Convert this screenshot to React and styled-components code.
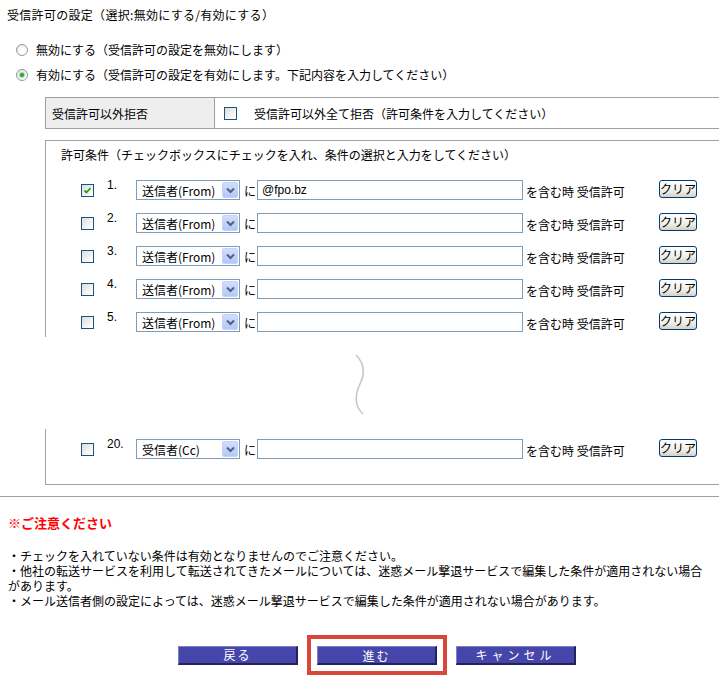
import React from "react";
import styled, { createGlobalStyle } from "styled-components";

const GlobalStyle = createGlobalStyle`
  body {
    margin: 0;
    background: #ffffff;
    color: #000000;
    font-family: "Noto Sans CJK JP", "Noto Sans", sans-serif;
    font-size: 12px;
  }
`;

const Page = styled.div`
  width: 719px;
  padding-top: 8px;
`;

const Title = styled.div`
  padding-left: 7px;
  line-height: 14px;
  letter-spacing: 0.3px;
`;

const RadioList = styled.div`
  margin-top: 15px;
  padding-left: 16px;
`;

const RadioRow = styled.label`
  display: flex;
  align-items: center;
  height: 25px;
  gap: 8px;
`;

const RadioDot = styled.span`
  width: 12px;
  height: 12px;
  box-sizing: border-box;
  border-radius: 50%;
  border: 1px solid #8e9aa8;
  background: radial-gradient(circle at 60% 65%, #ffffff 30%, #dcdcd4 100%);
  display: flex;
  align-items: center;
  justify-content: center;

  &::after {
    content: "";
    width: 4px;
    height: 4px;
    border-radius: 50%;
    background: ${(p) => (p.$on ? "#2fa52f" : "transparent")};
    box-shadow: ${(p) => (p.$on ? "0 0 1px 1px #9fd89f" : "none")};
  }
`;

const RejectBox = styled.div`
  margin: 10px 0 0 45px;
  display: flex;
  height: 32px;
  box-sizing: border-box;
  border: 1px solid #a0a0a0;
  border-right: none;
`;

const RejectHead = styled.div`
  width: 169px;
  background: #eeeeee;
  border-right: 1px solid #a0a0a0;
  padding-left: 6px;
  display: flex;
  align-items: center;
  box-sizing: border-box;
`;

const RejectBody = styled.div`
  display: flex;
  align-items: center;
  padding-left: 9px;
  gap: 17px;
`;

const CheckBox = styled.span`
  width: 13px;
  height: 13px;
  box-sizing: border-box;
  border: 1px solid #1c5180;
  background: linear-gradient(135deg, #dcdcd7 0%, #ffffff 90%);
  display: inline-flex;
  align-items: center;
  justify-content: center;
  flex: none;
`;

const CondBox = styled.div`
  margin: 11px 0 0 45px;
`;

const CondUpper = styled.div`
  border-top: 1px solid #a0a0a0;
  border-left: 1px solid #a0a0a0;
  padding: 7px 0 5px 0;
`;

const CondHead = styled.div`
  padding-left: 15px;
  line-height: 14px;
`;

const Rows = styled.div`
  margin-top: 18px;
  display: flex;
  flex-direction: column;
  gap: 13px;
`;

const Gap = styled.div`
  height: 92px;
  padding-left: 308px;
  box-sizing: border-box;
  padding-top: 17px;
`;

const CondLower = styled.div`
  border-left: 1px solid #a0a0a0;
  border-bottom: 1px solid #a0a0a0;
  padding: 10px 0 25px 0;
`;

const Row = styled.div`
  display: flex;
  align-items: center;
  height: 20px;
  padding-left: 35px;
`;

const CheckCell = styled.div`
  width: 26px;
  display: flex;
  align-items: center;
`;

const Num = styled.div`
  width: 29px;
  align-self: flex-start;
  line-height: 12px;
  font-family: "Liberation Sans", Arial, sans-serif;
  margin-top: -1px;
`;

const Select = styled.div`
  width: 104px;
  height: 20px;
  box-sizing: border-box;
  border: 1px solid #7f9db9;
  display: flex;
  align-items: center;
  justify-content: space-between;
  padding: 1px 1px 1px 5px;
  background: #ffffff;
`;

const DropBtn = styled.span`
  width: 16px;
  height: 16px;
  border-radius: 2px;
  background: linear-gradient(180deg, #d0ddfc 0%, #b4c8f7 100%);
  border: 1px solid #c3d3fd;
  box-sizing: border-box;
  display: flex;
  align-items: center;
  justify-content: center;
`;

const Ni = styled.div`
  width: 17px;
  padding-left: 4px;
  box-sizing: border-box;
`;

const TextInput = styled.div`
  width: 266px;
  height: 20px;
  box-sizing: border-box;
  border: 1px solid #7f9db9;
  padding: 0 4px;
  display: flex;
  align-items: center;
  font-family: "Liberation Sans", Arial, sans-serif;
`;

const Suffix = styled.div`
  width: 136px;
  padding-left: 3px;
  box-sizing: border-box;
  padding-top: 2px;
`;

const ClearBtn = styled.button`
  width: 38px;
  height: 18px;
  padding: 0;
  border: 1px solid #003c74;
  border-radius: 3px;
  background: linear-gradient(180deg, #ffffff 0%, #f0f0ea 60%, #d6d0c5 100%);
  font-family: "Noto Sans CJK JP", sans-serif;
  font-size: 12px;
  line-height: 14px;
  color: #000;
  margin-top: -2px;
`;

const Rule = styled.div`
  margin-top: 11px;
  border-top: 1px solid #a0a0a0;
`;

const Notice = styled.div`
  margin-top: 18px;
  padding-left: 8px;
  color: #ff0000;
  font-weight: bold;
  font-size: 13px;
  line-height: 16px;
`;

const Notes = styled.div`
  margin-top: 17px;
  padding: 0 0 0 8px;
  white-space: nowrap;
  line-height: 15px;
`;

const Actions = styled.div`
  margin-top: 27px;
  padding-left: 178px;
  display: flex;
  align-items: center;
  gap: 9px;
`;

const ActionBtn = styled.button`
  width: 120px;
  height: 19px;
  padding: 0;
  border: none;
  border-top: 1px solid #8080d0;
  border-left: 1px solid #8080d0;
  border-bottom: 2px solid #22225e;
  border-right: 2px solid #22225e;
  background: #4646aa;
  color: #ffffff;
  font-family: "Noto Sans CJK JP", sans-serif;
  font-size: 12px;
  letter-spacing: ${(p) => p.$spacing || "1px"};
  line-height: 15px;
`;

const Highlight = styled.div`
  border: 4px solid #d9463a;
  padding: 7px 6px 6px 6px;
  display: flex;
`;

const Check = ({ on }) => (
  <CheckBox>
    {on && (
      <svg width="9" height="9" viewBox="0 0 9 9">
        <path d="M1.5 4.5 L3.5 6.5 L7.5 2" stroke="#21a121" strokeWidth="1.8" fill="none" />
      </svg>
    )}
  </CheckBox>
);

const Chevron = () => (
  <svg width="9" height="7" viewBox="0 0 9 7">
    <path d="M1 1.5 L4.5 5 L8 1.5" stroke="#4d6185" strokeWidth="2" fill="none" />
  </svg>
);

const CondRow = ({ n, on, field, value }) => (
  <Row>
    <CheckCell>
      <Check on={on} />
    </CheckCell>
    <Num>{n}.</Num>
    <Select>
      <span>{field}</span>
      <DropBtn>
        <Chevron />
      </DropBtn>
    </Select>
    <Ni>に</Ni>
    <TextInput>{value}</TextInput>
    <Suffix>を含む時 受信許可</Suffix>
    <ClearBtn>クリア</ClearBtn>
  </Row>
);

const rows = [
  { n: 1, on: true, field: "送信者(From)", value: "@fpo.bz" },
  { n: 2, field: "送信者(From)" },
  { n: 3, field: "送信者(From)" },
  { n: 4, field: "送信者(From)" },
  { n: 5, field: "送信者(From)" },
];

export default function App() {
  return (
    <Page>
      <GlobalStyle />
      <Title>受信許可の設定（選択:無効にする/有効にする）</Title>
      <RadioList>
        <RadioRow>
          <RadioDot />
          無効にする（受信許可の設定を無効にします）
        </RadioRow>
        <RadioRow>
          <RadioDot $on />
          有効にする（受信許可の設定を有効にします。下記内容を入力してください）
        </RadioRow>
      </RadioList>

      <RejectBox>
        <RejectHead>受信許可以外拒否</RejectHead>
        <RejectBody>
          <Check />
          受信許可以外全て拒否（許可条件を入力してください）
        </RejectBody>
      </RejectBox>

      <CondBox>
        <CondUpper>
          <CondHead>許可条件（チェックボックスにチェックを入れ、条件の選択と入力をしてください）</CondHead>
          <Rows>
            {rows.map((r) => (
              <CondRow key={r.n} {...r} />
            ))}
          </Rows>
        </CondUpper>
        <Gap>
          <svg width="14" height="62" viewBox="0 0 14 62">
            <path
              d="M3 1 C 12 10, 12 20, 7 30 C 2 40, 1 52, 10 60"
              stroke="#c8c8c8"
              strokeWidth="1.6"
              fill="none"
            />
          </svg>
        </Gap>
        <CondLower>
          <CondRow n={20} field="受信者(Cc)" />
        </CondLower>
      </CondBox>

      <Rule />

      <Notice>※ご注意ください</Notice>
      <Notes>
        ・チェックを入れていない条件は有効となりませんのでご注意ください。
        <br />
        ・他社の転送サービスを利用して転送されてきたメールについては、迷惑メール撃退サービスで編集した条件が適用されない場合
        <br />
        があります。
        <br />
        ・メール送信者側の設定によっては、迷惑メール撃退サービスで編集した条件が適用されない場合があります。
      </Notes>

      <Actions>
        <ActionBtn $spacing="2px">戻る</ActionBtn>
        <Highlight>
          <ActionBtn $spacing="2px">進む</ActionBtn>
        </Highlight>
        <ActionBtn $spacing="4px">キャンセル</ActionBtn>
      </Actions>
    </Page>
  );
}
